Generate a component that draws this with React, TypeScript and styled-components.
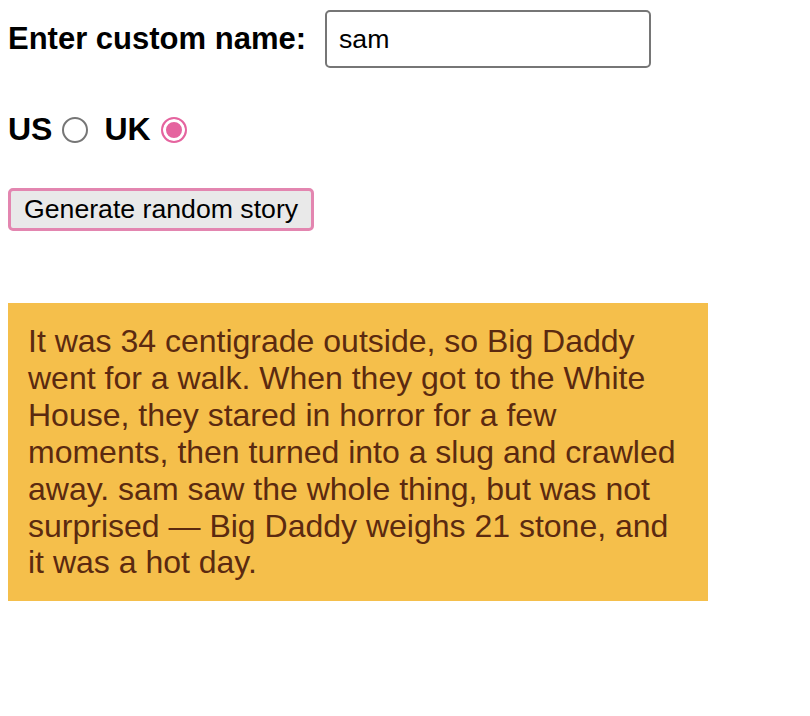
import styled, { createGlobalStyle } from "styled-components";

const GlobalStyle = createGlobalStyle`
  html, body {
    margin: 0;
    padding: 0;
    background: #ffffff;
  }
  body {
    font-family: "Liberation Sans", Arial, Helvetica, sans-serif;
    color: #000000;
  }
`;

const Page = styled.div`
  padding: 8px;
  width: 700px;
`;

const Row = styled.div<{ $top: number }>`
  display: flex;
  align-items: center;
  margin-top: ${(p) => p.$top}px;
`;

const Label = styled.label<{ $size?: number; $gap?: number }>`
  font-size: ${(p) => p.$size ?? 32}px;
  font-weight: bold;
  margin-right: ${(p) => p.$gap ?? 10}px;
`;

const NameInput = styled.input`
  box-sizing: border-box;
  width: 326px;
  height: 58px;
  padding: 0 12px;
  border: 2px solid #767676;
  border-radius: 5px;
  font-family: "Liberation Sans", Arial, sans-serif;
  font-size: 26.67px;
  color: #000000;
  outline: none;
`;

const Radio = styled.input`
  appearance: none;
  box-sizing: border-box;
  width: 26px;
  height: 26px;
  margin: 0 16px 0 0;
  border: 2px solid #767676;
  border-radius: 50%;
  background: #ffffff;

  &:checked {
    border: 2.5px solid #e5649f;
    box-shadow: inset 0 0 0 3px #ffffff;
    background: #e5649f;
  }
`;

const Button = styled.button`
  box-sizing: border-box;
  height: 43px;
  padding: 0 13px;
  border: 3px solid #e386b0;
  border-radius: 5px;
  background: #e9e9e9;
  font-family: "Liberation Sans", Arial, sans-serif;
  font-size: 26.67px;
  color: #000000;
`;

const Story = styled.p`
  box-sizing: border-box;
  width: 700px;
  margin: 72px 0 0;
  padding: 20px;
  background: #f5bf4b;
  color: #5b2a10;
  font-size: 32px;
  line-height: 36.9px;
`;

export default function App() {
  return (
    <Page>
      <GlobalStyle />
      <Row $top={2}>
        <Label htmlFor="customname" $size={31} $gap={19}>
          Enter custom name:
        </Label>
        <NameInput id="customname" type="text" defaultValue="sam" />
      </Row>
      <Row $top={43}>
        <Label htmlFor="us">US</Label>
        <Radio id="us" type="radio" name="ukus" value="us" />
        <Label htmlFor="uk">UK</Label>
        <Radio id="uk" type="radio" name="ukus" value="uk" defaultChecked />
      </Row>
      <Row $top={40}>
        <Button>Generate random story</Button>
      </Row>
      <Story>
        It was 34 centigrade outside, so Big Daddy went for a walk. When they
        got to the White House, they stared in horror for a few moments, then
        turned into a slug and crawled away. sam saw the whole thing, but was
        not surprised — Big Daddy weighs 21 stone, and it was a hot day.
      </Story>
    </Page>
  );
}
